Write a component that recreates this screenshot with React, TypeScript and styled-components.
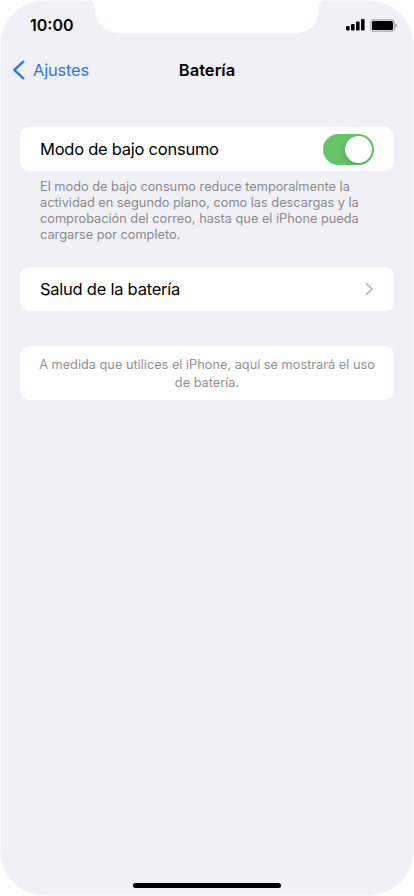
import React from 'react';
import styled, { createGlobalStyle } from 'styled-components';

const GlobalStyle = createGlobalStyle`
  * { box-sizing: border-box; }
  body { margin: 0; background: #fff; }
`;

const Phone = styled.div`
  position: relative;
  display: flex;
  flex-direction: column;
  width: 414px;
  height: 896px;
  overflow: hidden;
  border-radius: 46px;
  background: #f1f0f6;
  box-shadow: inset 0 0 0 1px rgba(255, 255, 255, 0.4);
  color: #000;
  font-family: Inter, 'Liberation Sans', sans-serif;
`;

const Notch = styled.svg`
  position: absolute;
  top: 0;
  left: 86px;
`;

const StatusBar = styled.header`
  display: flex;
  justify-content: space-between;
  align-items: center;
  height: 50px;
  padding: 0 17px 0 30px;
`;

const Clock = styled.time`
  font-size: 16px;
  font-weight: 600;
  letter-spacing: 0;
`;

const StatusIcons = styled.div`
  display: flex;
  align-items: center;
  gap: 5px;
`;

const NavBar = styled.nav`
  display: grid;
  grid-template-columns: 1fr auto 1fr;
  align-items: center;
  height: 40px;
  padding: 0 12px;
`;

const BackButton = styled.button`
  display: flex;
  align-items: center;
  gap: 8px;
  padding: 0;
  border: 0;
  background: none;
  color: #3478e5;
  font: inherit;
  font-size: 16.5px;
  letter-spacing: -0.2px;
`;

const Title = styled.h1`
  margin: 0;
  font-size: 16.5px;
  font-weight: 600;
  letter-spacing: 0;
`;

const Content = styled.main`
  display: flex;
  flex-direction: column;
  padding: 37px 20px 0;
`;

const Row = styled.section`
  display: flex;
  align-items: center;
  justify-content: space-between;
  height: 44px;
  padding: 0 20px;
  border-radius: 9px;
  background: #fff;
`;

const Label = styled.span`
  font-size: 16.5px;
  letter-spacing: -0.25px;
  white-space: nowrap;
`;

const Switch = styled.button`
  display: flex;
  justify-content: flex-end;
  width: 51px;
  height: 31px;
  padding: 2px;
  border: 0;
  border-radius: 16px;
  background: #65c368;
`;

const Knob = styled.span`
  width: 27px;
  height: 27px;
  border-radius: 50%;
  background: #fff;
  box-shadow: -1px 2px 4px rgba(0, 0, 0, 0.15);
`;

const Note = styled.p`
  margin: 8px 0 24px;
  padding-left: 20px;
  color: #8a8a8f;
  font-size: 12.75px;
  line-height: 16px;
  white-space: nowrap;
`;

const UsageCard = styled.section`
  height: 54px;
  margin-top: 35px;
  padding-top: 10px;
  border-radius: 9px;
  background: #fff;
  color: #929296;
  font-size: 12.75px;
  line-height: 18px;
  text-align: center;
  white-space: nowrap;
`;

const HomeIndicator = styled.div`
  width: 148px;
  height: 5px;
  margin: auto auto 8px;
  border-radius: 3px;
  background: #000;
`;

export default function App() {
  return (
    <>
      <GlobalStyle />
      <Phone>
        <Notch width="242" height="33" viewBox="0 0 242 33">
          <path d="M0 0C6 0 9 3 9 9C9 23 18 33 32 33H210C224 33 233 23 233 9C233 3 236 0 242 0Z" fill="#fff" />
        </Notch>
        <StatusBar>
          <Clock>10:00</Clock>
          <StatusIcons>
            <svg width="19" height="12" viewBox="0 0 19 12">
              <rect x="0" y="7" width="3.6" height="4.5" rx="1" />
              <rect x="5" y="5" width="3.6" height="6.5" rx="1" />
              <rect x="10" y="2.5" width="3.6" height="9" rx="1" />
              <rect x="15" y="0" width="3.6" height="11.5" rx="1" />
            </svg>
            <svg width="27" height="13" viewBox="0 0 27 13">
              <rect x="0.7" y="0.7" width="23.6" height="11.6" rx="3" fill="none" stroke="#b5b5b9" strokeWidth="1.4" />
              <rect x="2" y="2" width="21" height="9" rx="1.6" />
              <path d="M25.3 4.5C27.3 5 27.3 8 25.3 8.5Z" fill="#99999d" />
            </svg>
          </StatusIcons>
        </StatusBar>
        <NavBar>
          <BackButton>
            <svg width="13" height="20" viewBox="0 0 13 20" fill="none" stroke="currentColor" strokeWidth="2.4" strokeLinecap="round" strokeLinejoin="round">
              <path d="M11.3 1.7L2.3 10L11.3 18.3" />
            </svg>
            Ajustes
          </BackButton>
          <Title>Batería</Title>
        </NavBar>
        <Content>
          <Row>
            <Label>Modo de bajo consumo</Label>
            <Switch role="switch" aria-checked="true" aria-label="Modo de bajo consumo">
              <Knob />
            </Switch>
          </Row>
          <Note>
            El modo de bajo consumo reduce temporalmente la<br />
            actividad en segundo plano, como las descargas y la<br />
            comprobación del correo, hasta que el iPhone pueda<br />
            cargarse por completo.
          </Note>
          <Row>
            <Label>Salud de la batería</Label>
            <svg width="9" height="14" viewBox="0 0 9 14" fill="none" stroke="#c0c0c4" strokeWidth="2" strokeLinecap="round" strokeLinejoin="round">
              <path d="M1.5 1.6L7 7L1.5 12.4" />
            </svg>
          </Row>
          <UsageCard>
            A medida que utilices el iPhone, aquí se mostrará el uso<br />
            de batería.
          </UsageCard>
        </Content>
        <HomeIndicator />
      </Phone>
    </>
  );
}
